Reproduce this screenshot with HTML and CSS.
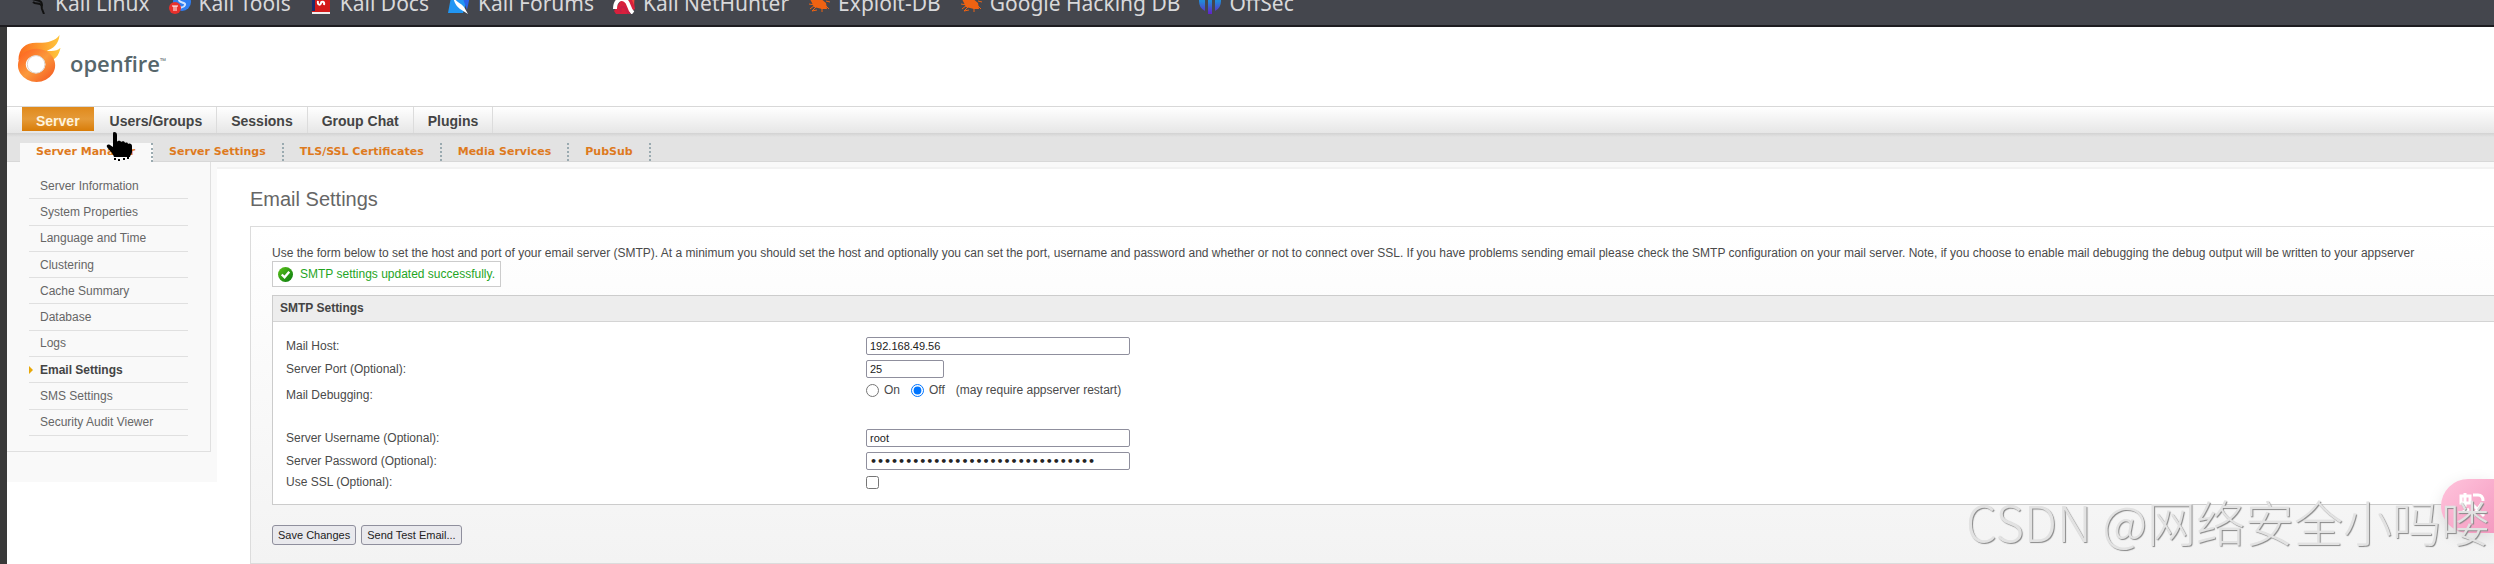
FILE: index.html
```html
<!DOCTYPE html>
<html lang="en">
<head>
  <meta charset="UTF-8">
  <meta name="viewport" content="width=device-width, initial-scale=1.0">
  <title>Openfire Admin Console: Email Settings</title>
  <link rel="stylesheet" href="styles.css">
</head>
<body>
<!-- Browser bookmarks -->
<nav class="bookmarks">
  <a href="#">
    <svg class="icon" viewBox="0 0 22 22"><path d="M4 5c4 4 9 2 12 5 2 2 0 4 1 7l2 5" fill="none" stroke="#111" stroke-width="2"/><path d="M8 10c3 3 7 0 9 4" fill="none" stroke="#111" stroke-width="2"/></svg>
    Kali Linux
  </a>
  <a href="#">
    <svg class="icon" viewBox="0 0 22 22"><circle cx="13" cy="10" r="9" fill="#2f7df0"/><path d="M18 6c-4-2-8-1-8 2s7 2 6 5-5 3-7 1" fill="none" stroke="#cfe2ff" stroke-width="2"/><circle cx="6" cy="16" r="6" fill="#e8302c"/><path d="M3 14h6M5 14v5M7 14v5" stroke="#fff" fill="none"/></svg>
    Kali Tools
  </a>
  <a href="#">
    <svg class="icon" viewBox="0 0 22 22"><path d="M2 0h18v22H2z" fill="#d31b1b"/><path d="M2 0h3v19H2z" fill="#1b2c6b"/><path d="M2 20h18v2H2z" fill="#eee"/><path d="M8 9c-1 5 3 4 3 2s4-2 3 2" fill="none" stroke="#fff" stroke-width="2"/></svg>
    Kali Docs
  </a>
  <a href="#">
    <svg class="icon" viewBox="0 0 22 22"><path d="M4 0h18L15 21H0z" fill="#2196f3"/><path d="M14 4h8l-3 14z" fill="#2a62e8"/><path d="M5 2c2 9 7 8 11 13l4 7-8-5C8 14 5 9 5 2z" fill="#fff"/></svg>
    Kali Forums
  </a>
  <a href="#">
    <svg class="icon" viewBox="0 0 22 22"><path d="M12 2l8 1 2 14-8 5H3l-2-3z" fill="#d8203c"/><path d="M16 1l6 0-1 12z" fill="#f0483a"/><path d="M2 17C2 9 7 5 12 8s3 9 8 13" fill="none" stroke="#fff" stroke-width="4"/><path d="M8 20c-2-4 2-7 4-4s2 4 5 6" fill="none" stroke="#c81e46" stroke-width="2"/></svg>
    Kali NetHunter
  </a>
  <a href="#">
    <svg class="icon" viewBox="0 0 22 22"><path d="M2 7l9-2 7 6 1 6-5 0-8-2z" fill="#ef6212"/><path d="M1 12l6 1-5 4M8 15l-4 4 5-1M14 16l0 4M18 9l4 1M18 14l3 3" fill="none" stroke="#ef6212"/></svg>
    Exploit-DB
  </a>
  <a href="#">
    <svg class="icon" viewBox="0 0 22 22"><path d="M2 7l9-2 7 6 1 6-5 0-8-2z" fill="#ef6212"/><path d="M1 12l6 1-5 4M8 15l-4 4 5-1M14 16l0 4M18 9l4 1M18 14l3 3" fill="none" stroke="#ef6212"/></svg>
    Google Hacking DB
  </a>
  <a href="#">
    <svg class="icon" viewBox="0 0 22 22"><defs><linearGradient id="sec" x1="0" y1="0" x2="0" y2="1"><stop offset=".3" stop-color="#2389d8"/><stop offset="1" stop-color="#6320c8"/></linearGradient></defs><path d="M0 4h6v15Q0 16 0 9zM9 4h4v18H9zM16 4h6v5q0 7-6 10z" fill="url(#sec)"/></svg>
    OffSec
  </a>
</nav>

<div class="page">
  <header class="header">
    <svg class="flame" viewBox="0 0 44 48">
      <defs>
        <linearGradient id="ring" x1="0" y1="0" x2="1" y2="1"><stop offset="0" stop-color="#ff5a1c"/><stop offset=".5" stop-color="#fb9a3c"/><stop offset="1" stop-color="#f4511e"/></linearGradient>
        <linearGradient id="fire" x1="0" y1="0" x2="1" y2="0"><stop offset="0" stop-color="#fb6a1e"/><stop offset="1" stop-color="#ffc83c"/></linearGradient>
      </defs>
      <path d="M1 26C1 12 10 7 22 8c9 0 17-2 21-8-1 10-7 14-13 16 6 1 11 0 14-3-2 9-6 12-10 13-2-6-8-10-14-10C12 16 6 20 1 26z" fill="url(#fire)"/>
      <path fill-rule="evenodd" d="M19 14a19 17 0 1 0 1 0zM19 21a10 9 0 1 1-1 0z" fill="url(#ring)"/>
      <circle cx="19" cy="30" r="9" fill="#fff" stroke="#d9cfc6"/>
    </svg>
    <span class="brand">openfire<sup>™</sup></span>
  </header>

  <nav class="tabs">
    <a href="#" class="active">Server</a>
    <a href="#">Users/Groups</a>
    <a href="#">Sessions</a>
    <a href="#">Group Chat</a>
    <a href="#">Plugins</a>
  </nav>

  <nav class="subtabs">
    <a href="#" class="active">Server Manager</a>
    <a href="#">Server Settings</a>
    <a href="#">TLS/SSL Certificates</a>
    <a href="#">Media Services</a>
    <a href="#">PubSub</a>
  </nav>

  <div class="columns">
    <aside class="sidebar">
      <ul class="menu">
        <li><a href="#">Server Information</a></li>
        <li><a href="#">System Properties</a></li>
        <li><a href="#">Language and Time</a></li>
        <li><a href="#">Clustering</a></li>
        <li><a href="#">Cache Summary</a></li>
        <li><a href="#">Database</a></li>
        <li><a href="#">Logs</a></li>
        <li class="current"><a href="#">Email Settings</a></li>
        <li><a href="#">SMS Settings</a></li>
        <li><a href="#">Security Audit Viewer</a></li>
      </ul>
    </aside>

    <main class="main">
      <h1>Email Settings</h1>
      <form class="content">
        <p class="intro">Use the form below to set the host and port of your email server (SMTP). At a minimum you should set the host and optionally you can set the port, username and password and whether or not to connect over SSL. If you have problems sending email please check the SMTP configuration on your mail server. Note, if you choose to enable mail debugging the debug output will be written to your appserver</p>
        <div class="success">
          <svg viewBox="0 0 16 16"><defs><linearGradient id="ok" x1="0" y1="0" x2="1" y2="1"><stop offset="0" stop-color="#5cc21a"/><stop offset="1" stop-color="#077a10"/></linearGradient></defs><circle cx="8" cy="8" r="8" fill="url(#ok)"/><path d="M4 8l3 3 5-6" fill="none" stroke="#fff" stroke-width="2.5"/></svg>
          SMTP settings updated successfully.
        </div>

        <section class="box">
          <h2>SMTP Settings</h2>
          <table class="fields">
            <tr>
              <td class="name"><label for="host">Mail Host:</label></td>
              <td><input type="text" id="host" class="text" value="192.168.49.56"></td>
            </tr>
            <tr class="short">
              <td><label for="port">Server Port (Optional):</label></td>
              <td><input type="text" id="port" class="text small" value="25"></td>
            </tr>
            <tr class="debug">
              <td class="caption">Mail Debugging:</td>
              <td>
                <div class="choices">
                  <input type="radio" name="debug" id="on"><label for="on">On</label>
                  <input type="radio" name="debug" id="off" checked><label for="off">Off</label>
                  <span>(may require appserver restart)</span>
                </div>
              </td>
            </tr>
            <tr>
              <td><label for="user">Server Username (Optional):</label></td>
              <td><input type="text" id="user" class="text" value="root"></td>
            </tr>
            <tr class="short">
              <td><label for="pass">Server Password (Optional):</label></td>
              <td><input type="password" id="pass" class="text" value="01234567890123456789012345678901"></td>
            </tr>
            <tr class="last">
              <td><label for="ssl">Use SSL (Optional):</label></td>
              <td><input type="checkbox" id="ssl"></td>
            </tr>
          </table>
        </section>

        <div class="buttons">
          <button type="button">Save Changes</button>
          <button type="button">Send Test Email...</button>
        </div>
      </form>
    </main>
  </div>
</div>

<!-- Mouse pointer -->
<svg class="pointer" viewBox="0 0 26 30"><path d="M8 1c2 0 3 1 3 3v7c1-2 4-1 4 0 1-1 4-1 4 1 2-1 3 0 3 1 2-1 4 0 4 2v6c0 2-2 3-2 5H8c-1-4-5-7-7-10-1-2 1-3 3-2l3 2V4c0-2 0-3 1-3z"/><path d="M8 27h2v2H8zM12 28h2v2h-2zM17 27h2v2h-2zM21 26h2v2h-2z"/></svg>

<button type="button" class="translate" aria-label="Translate">
  <svg viewBox="0 0 28 28"><path d="M3 5h9v7H3zM7 2v14M15 4h5q5 0 5 6M24 12l-9 13M15 14l11 11M3 22l8-4" fill="none" stroke="#fff" stroke-width="3"/></svg>
</button>
<div class="watermark">CSDN @网络安全小吗喽</div>
</body>
</html>
```
FILE: styles.css
```css
body {
  margin: 0;
  min-height: 100vh;
  overflow: hidden;
  background-color: #fff;
  color: #4a4a4a;
  font-family: "Liberation Sans", Arial, sans-serif;
  font-size: 12px;
}

a {
  color: inherit;
  text-decoration: none;
}

/* Bookmarks bar */
.bookmarks {
  display: flex;
  align-items: flex-end;
  gap: 19px;
  box-sizing: border-box;
  height: 27px;
  padding: 0 25px 10px;
  overflow: hidden;
  background-color: #44464d;
  border-bottom: 2px solid #1d1c20;
  color: #d8d8da;
  font-family: "Noto Sans", sans-serif;
  font-size: 21px;
  line-height: 24px;
  white-space: nowrap;
}

.bookmarks a {
  display: flex;
  align-items: center;
  gap: 8px;
}

.icon {
  width: 22px;
  height: 22px;
}

/* Page */
.page {
  border-left: 7px solid #393939;
}

.header {
  display: flex;
  align-items: flex-start;
  gap: 9px;
  box-sizing: border-box;
  height: 79px;
  padding: 8px 10px;
}

.flame {
  width: 44px;
  height: 47px;
}

.brand {
  margin-top: 12px;
  color: #56666b;
  font-family: "Open Sans", sans-serif;
  font-size: 22px;
  font-weight: 600;
  line-height: 32px;
}

.brand sup {
  font-size: 8px;
  line-height: 8px;
}

.tabs {
  display: flex;
  box-sizing: border-box;
  height: 27px;
  padding-left: 15px;
  background: linear-gradient(#fff, #e6e6e6);
  border-top: 1px solid #d8d8d8;
  font-size: 14px;
  font-weight: bold;
  line-height: 28px;
}

.tabs a {
  padding: 0 14px;
  border-right: 1px solid #dcdcdc;
  color: #444;
}

.tabs .active {
  height: 24px;
  margin-right: 2px;
  background: linear-gradient(#e08a1c, #e59a38 50%, #d87c08);
  border-right: none;
  color: #fff3dc;
}

.subtabs {
  display: flex;
  align-items: flex-end;
  box-sizing: border-box;
  height: 29px;
  padding-left: 13px;
  background: linear-gradient(#d2d2d2, #e3e3e3 4px, #e3e3e3);
  border-bottom: 1px solid #d8d8d8;
  color: #de7a1e;
  font-family: "DejaVu Sans", sans-serif;
  font-size: 11px;
  font-weight: bold;
  line-height: 18px;
}

.subtabs a {
  padding: 0 16px;
  border-right: 2px dotted #9aaab0;
}

.subtabs .active {
  margin-bottom: -1px;
  padding-bottom: 1px;
  background-color: #f9f9f9;
}

.columns {
  display: flex;
  align-items: flex-start;
  background: linear-gradient(#f9f9f9 5px, #f2f2f2 5px, #f2f2f2 7px, #fff 7px);
}

/* Side menu */
.sidebar {
  flex: none;
  box-sizing: border-box;
  width: 210px;
  padding: 0 6px 30px 0;
  background-color: #f9f9f9;
}

.menu {
  display: grid;
  grid-auto-rows: 1fr;
  min-height: 263px;
  margin: 0;
  padding: 11px 22px 15px;
  border-right: 1px solid #e0e0e0;
  border-bottom: 1px solid #e0e0e0;
  list-style: none;
}

.menu li {
  display: flex;
  align-items: center;
  padding-left: 11px;
  border-bottom: 1px solid #e0e0e0;
  color: #666;
}

.menu .current {
  padding-left: 0;
  color: #444;
  font-weight: bold;
}

.menu .current::before {
  content: "";
  margin-right: 7px;
  border: 4px solid transparent;
  border-left-color: #e8a808;
  border-right: none;
}

/* Main column */
.main {
  flex: 1;
  min-width: 0;
  margin-top: 7px;
  padding: 19px 0 0 33px;
  background-color: #fff;
  border-top-left-radius: 6px;
}

h1 {
  margin: 0 0 16px;
  color: #666;
  font-size: 20px;
  font-weight: normal;
  line-height: 22px;
}

.content {
  padding: 18px 0 18px 21px;
  background: linear-gradient(#fff, #f3f3f3);
  border: 1px solid #dcdcdc;
  border-right: none;
}

.intro {
  margin: 0;
  overflow: hidden;
  line-height: 16px;
  white-space: nowrap;
}

.success {
  display: flex;
  align-items: center;
  gap: 7px;
  width: fit-content;
  height: 24px;
  padding: 0 5px;
  background-color: #fff;
  border: 1px solid #ccc;
  color: #1fa51f;
}

.success svg {
  width: 15px;
  height: 15px;
}

.box {
  margin-top: 8px;
  padding-bottom: 12px;
  background-color: #fff;
  border: 1px solid #ccc;
  border-right: none;
}

h2 {
  margin: 0 0 12px;
  padding-left: 7px;
  background-color: #ededed;
  border-bottom: 1px solid #d4d4d4;
  color: #444;
  font-size: 12px;
  line-height: 25px;
}

.fields {
  margin-left: 13px;
  border-collapse: collapse;
}

.fields td {
  height: 24px;
  padding: 0;
}

.fields .short td {
  height: 22px;
}

.fields .last td {
  height: 20px;
}

.fields .name {
  width: 580px;
}

.fields .debug td {
  height: 46px;
  padding-top: 3px;
  box-sizing: border-box;
  vertical-align: top;
}

.fields .debug .caption {
  padding-top: 8px;
}

.fields input {
  display: block;
  margin: 0;
}

.text {
  box-sizing: border-box;
  width: 264px;
  height: 18px;
  padding: 0 3px;
  background-color: #fff;
  border: 1px solid #8f8f9d;
  border-radius: 2px;
  color: #222;
  font-family: "Liberation Sans", Arial, sans-serif;
  font-size: 11px;
}

.small {
  width: 78px;
}

.text[type="password"] {
  font-family: "DejaVu Sans", sans-serif;
  font-weight: bold;
}

.choices {
  display: flex;
  align-items: center;
}

.choices label {
  margin: 0 11px 0 5px;
}

/* Buttons */
.buttons {
  display: flex;
  gap: 5px;
  margin-top: 20px;
}

.buttons button {
  height: 20px;
  padding: 0 5px;
  background-color: #e9e9ed;
  border: 1px solid #8f8f9d;
  border-radius: 3px;
  color: #222;
  font-family: "Liberation Sans", Arial, sans-serif;
  font-size: 11px;
}

/* Things floating over the page */
.pointer {
  position: absolute;
  top: 131px;
  left: 106px;
  width: 26px;
  height: 30px;
}

.translate {
  position: absolute;
  right: 0;
  bottom: 31px;
  width: 53px;
  height: 54px;
  padding: 0 0 0 8px;
  background: linear-gradient(135deg, #ffc4dc, #f49ac0);
  border: none;
  border-radius: 27px 0 0 27px;
  box-shadow: 0 4px 16px rgba(0, 0, 0, 0.1);
}

.translate svg {
  width: 28px;
  height: 28px;
}

.watermark {
  position: absolute;
  right: 4px;
  bottom: 8px;
  color: #e2e2e2;
  font-family: "Noto Sans CJK SC", sans-serif;
  font-size: 49px;
  font-weight: 300;
  line-height: 70px;
  text-shadow: 1px 1px 1px #888;
  white-space: nowrap;
}
```
